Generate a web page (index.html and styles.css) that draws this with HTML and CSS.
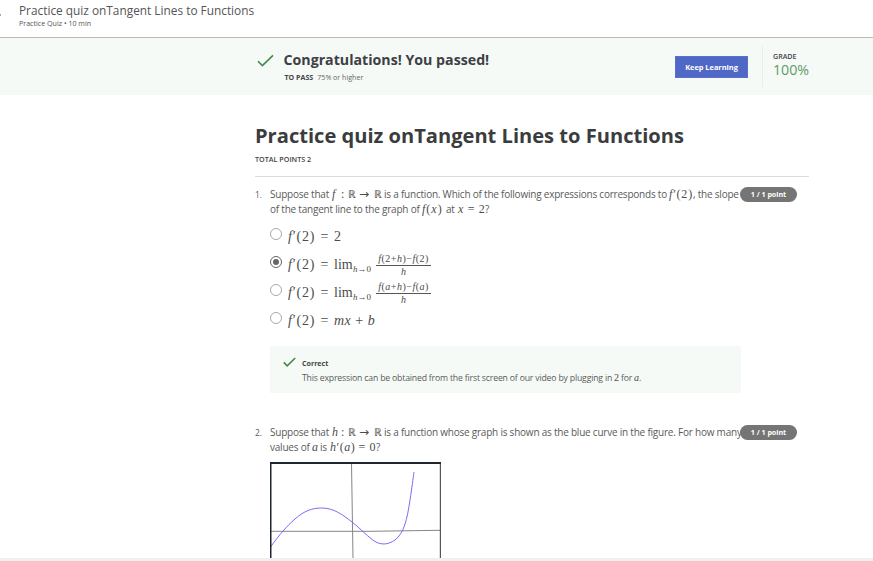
FILE: index.html
```html
<!DOCTYPE html>
<html lang="en">
<head>
<meta charset="utf-8">
<title>Practice quiz</title>
<link rel="stylesheet" href="styles.css">
</head>
<body>
<header class="topbar">
  <span class="back-edge"></span>
  <div class="topbar-text">
    <div class="topbar-title">Practice quiz onTangent Lines to Functions</div>
    <div class="topbar-sub">Practice Quiz • 10 min</div>
  </div>
</header>
<section class="banner">
  <svg class="banner-check" viewBox="0 0 17 14"><path d="M1 7.3 5.4 11.6 16 1.4"/></svg>
  <div class="banner-text">
    <div class="banner-title">Congratulations! You passed!</div>
    <div class="banner-pass"><b>TO PASS</b><span>75% or higher</span></div>
  </div>
  <button class="keep">Keep Learning</button>
  <div class="grade">
    <div class="grade-label">GRADE</div>
    <div class="grade-value">100%</div>
  </div>
</section>
<main class="quiz">
  <h1>Practice quiz onTangent Lines to Functions</h1>
  <div class="total">TOTAL POINTS 2</div>
  <section class="question first">
    <span class="num">1.</span>
    <div class="body">
      <p class="line"><span class="w-suppose">Suppose that</span><span class="m w-map"><i>f</i><span>:</span><span>ℝ</span><span class="arr">→</span><span>ℝ</span></span><span class="w-q1a">is a function. Which of the following expressions corresponds to</span><span class="m w-fp"><i>f</i>′(2)</span><span class="w-q1b">, the slope</span></p>
      <p class="line"><span class="w-q1c">of the tangent line to the graph of</span><span class="m w-fx"><i>f</i>(<i>x</i>)</span><span class="w-at">at</span><span class="m w-x2"><i>x</i> = 2</span><span>?</span></p>
      <ul class="options">
        <li class="option o1"><span class="radio"></span><span class="m lhs"><i>f</i>′(2) =</span><span class="m">2</span></li>
        <li class="option o2"><span class="radio on"></span><span class="m lhs"><i>f</i>′(2) =</span><span class="m lim">lim</span><span class="m sub"><i>h</i>→0</span><span class="m frac"><span class="top"><i>f</i>(2+<i>h</i>)−<i>f</i>(2)</span><span><i>h</i></span></span></li>
        <li class="option o3"><span class="radio"></span><span class="m lhs"><i>f</i>′(2) =</span><span class="m lim">lim</span><span class="m sub"><i>h</i>→0</span><span class="m frac"><span class="top"><i>f</i>(<i>a</i>+<i>h</i>)−<i>f</i>(<i>a</i>)</span><span><i>h</i></span></span></li>
        <li class="option o4"><span class="radio"></span><span class="m lhs"><i>f</i>′(2) =</span><span class="m mxb"><i>mx</i> + <i>b</i></span></li>
      </ul>
      <div class="feedback">
        <svg class="fb-check" viewBox="0 0 13 11"><path d="M.8 5.4 4.2 8.9 12.2 1"/></svg>
        <div>
          <div class="fb-title">Correct</div>
          <p class="fb-text"><span class="w-fb">This expression can be obtained from the first screen of our video by plugging in</span><span class="m w-two">2</span><span class="w-for">for</span><span class="m"><i>a</i></span>.</p>
        </div>
      </div>
    </div>
    <span class="points">1 / 1 point</span>
  </section>
  <section class="question second">
    <span class="num">2.</span>
    <div class="body">
      <p class="line"><span class="w-suppose">Suppose that</span><span class="m w-map"><i>h</i><span>:</span><span>ℝ</span><span class="arr">→</span><span>ℝ</span></span><span class="w-q2a">is a function whose graph is shown as the blue curve in the figure. For how many</span></p>
      <p class="line"><span class="w-values">values of</span><span class="m w-a"><i>a</i></span><span class="w-is">is</span><span class="m w-hp"><i>h</i>′(<i>a</i>) = 0</span><span>?</span></p>
      <svg class="graph" viewBox="0 0 171 96">
        <path class="axis" d="M1 69.3H100L170 68.3M81.5 1 83 96"/>
        <path class="curve" d="M.5 85C10 72 16 65 25 57C34 49 42 46 51.5 46C64 46 73 53 82 60C92 68 98 75 105 79.5C111 83 118 83 125 78C134 71 137 58 140 38C142 25 143 17 144 10"/>
        <path class="side" d="M.75 0V96"/><path class="right" d="M170.4 0V96"/>
        <path class="roof" d="M0 1H171"/>
      </svg>
    </div>
    <span class="points">1 / 1 point</span>
  </section>
</main>
<footer class="bottom"></footer>
</body>
</html>
```
FILE: styles.css
```css
* { box-sizing: border-box; }
body {
  margin: 0; height: 561px; overflow: hidden; background: #fff; color: #5a5a5a;
  font-family: "Open Sans", sans-serif; font-size: 10px; letter-spacing: -.22px;
  display: flex; flex-direction: column;
}
p, h1, ul { margin: 0; padding: 0; }
.topbar, .banner, h1, .total, .points, .fb-title { letter-spacing: 0; }
.topbar { height: 38px; flex: none; display: flex; border-bottom: 1px solid #b7bbb9; }
.back-edge { width: 1px; height: 2px; margin: 14px 18px 0 0; background: #aaa; }
.topbar-title { font-size: 11.85px; line-height: 18px; margin-top: 1px; white-space: nowrap; color: #555; }
.topbar-sub { font-size: 7.1px; line-height: 8px; color: #555; }
.banner { height: 57px; flex: none; display: flex; background: #f5faf7; padding-left: 257px; }
.banner-check { width: 17px; height: 14px; margin: 16px 9px 0 0; }
svg path { fill: none; }
.banner-check path, .fb-check path { stroke: #42894f; stroke-width: 1.6; }
.banner-text { width: 392px; }
.banner-title { font-size: 14.2px; font-weight: 700; line-height: 20px; margin: 12px 0 0 .5px; color: #3d4042; }
.banner-pass { font-size: 7.1px; line-height: 10px; margin: 2px 0 0 1.5px; display: flex; gap: 4px; color: #666; }
.banner-pass b { color: #444; }
.keep { width: 73px; height: 22px; margin-top: 18px; padding: 0; border: 1px solid #5a70cd; background: #5068c5; color: #fff; font: 700 7.4px/20px "Open Sans", sans-serif; }
.grade { margin: 8px 0 0 14px; height: 41px; border-left: 1px solid #e9eeeb; padding-left: 10px; }
.grade-label { font-size: 7.1px; font-weight: 600; line-height: 10px; margin-top: 5px; color: #444; }
.grade-value { font-size: 14.2px; line-height: 16px; margin-top: 1px; color: #5c9b68; }
.quiz { width: 554px; margin-left: 255px; flex: 1; min-height: 0; overflow: hidden; }
h1 { font-size: 20.1px; line-height: 28px; margin-top: 27px; white-space: nowrap; color: #3b3c3e; }
.total { font-size: 7.2px; font-weight: 600; line-height: 10px; margin-top: 4px; padding-bottom: 12px; height: 23px; border-bottom: 1px solid #dcdcdc; color: #444; }
.question { display: flex; position: relative; }
.first { padding-top: 10px; height: 238px; }
.second { padding-top: 10px; }
.num { width: 15px; font-size: 8.5px; line-height: 15px; }
.body { width: 471px; }
.line { height: 15px; line-height: 15px; display: flex; align-items: baseline; white-space: nowrap; }
.line > span, .fb-text > span { flex: none; }
.m { font-family: "Liberation Serif", serif; font-size: 12px; letter-spacing: 0; color: #4c4c4c; white-space: nowrap; }
.w-suppose { width: 62px; }
.w-map { width: 52px; display: grid; grid-template-columns: 9px 7px 11px 15px 10px; }
.w-map > :last-child, .w-map > :nth-child(3) { font-size: 11px; }
.w-map .arr { font-family: "DejaVu Sans", sans-serif; font-size: 12px; }
.w-q1a { width: 285px; }
.w-fp { width: 24px; letter-spacing: .8px; }
.w-q1c { width: 152px; }
.w-fx { width: 24px; letter-spacing: 1px; }
.w-at { width: 12px; }
.w-x2 { width: 27px; word-spacing: 1.3px; }
.w-values { width: 42px; }
.w-a { width: 8px; }
.w-is { width: 10px; }
.w-hp { width: 46px; letter-spacing: .5px; }
.points { height: 15px; width: 57px; margin-left: -1px; border-radius: 8px; background: #757575; color: #fff; font-size: 7.1px; font-weight: 700; line-height: 15px; text-align: center; z-index: 1; }
.options { list-style: none; margin-top: 11px; height: 118px; }
.option { display: flex; height: 28px; line-height: 18px; }
.radio { width: 12px; height: 12px; margin-right: 6px; border: 1px solid #aaa; border-radius: 50%; display: grid; place-items: center; flex: none; }
.radio.on { border-color: #666; }
.radio.on::after { content: ""; width: 6px; height: 6px; border-radius: 50%; background: #666; }
.option .m { font-size: 14px; line-height: 18px; }
.option .lhs { width: 46px; letter-spacing: .8px; word-spacing: 1px; }
.option .lim { width: 19px; }
.option .mxb { letter-spacing: .5px; }
.option .sub { font-size: 9px; width: 23px; padding-top: 4px; }
.option .frac { font-size: 10px; width: 55px; line-height: 11px; text-align: center; display: flex; flex-direction: column; margin-top: -2px; }
.frac .top { border-bottom: 1px solid #555; height: 12px; line-height: 10px; letter-spacing: .5px; }
.feedback { width: 471px; height: 47px; background: #f5faf7; display: flex; padding: 11px 0 0 13px; }
.fb-check { width: 13px; height: 11px; margin-right: 6px; }
.fb-title { font-size: 7.1px; line-height: 10px; font-weight: 700; margin-top: 1px; color: #444; }
.fb-text { font-size: 8.7px; letter-spacing: -.18px; line-height: 14px; margin-top: 3px; display: flex; align-items: baseline; white-space: nowrap; }
.fb-text .m { font-size: 10px; }
.w-fb { width: 312px; }
.w-two { width: 7px; }
.w-for { width: 13px; }
.graph { width: 171px; height: 96px; display: block; margin-top: 7px; }
.axis { stroke: #858585; stroke-width: 1; }
.curve { stroke: #6b5cf0; stroke-width: .9; }
.side, .roof { stroke: #20262d; stroke-width: 1.5; }
.roof { stroke-width: 2; }
.right { stroke: #555; stroke-width: 1.2; }
.bottom { height: 3px; flex: none; background: #f0f0f0; }
```
